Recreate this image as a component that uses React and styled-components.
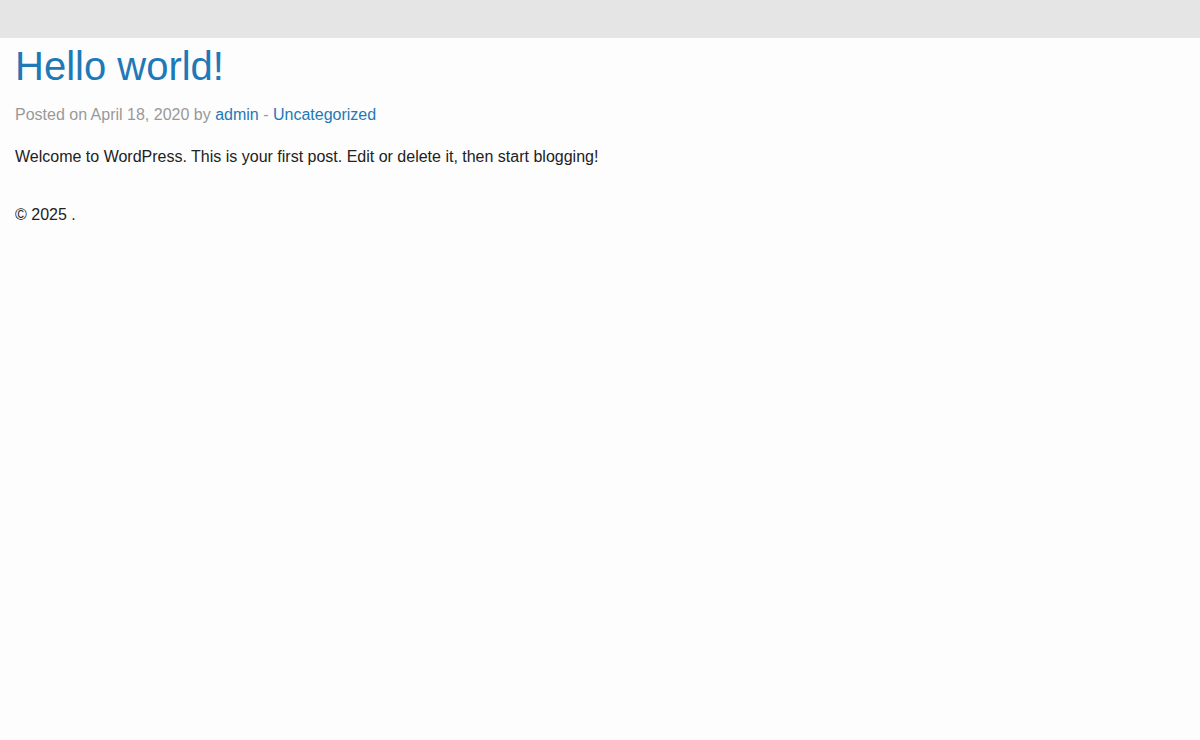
import styled, { createGlobalStyle } from "styled-components"

const Global = createGlobalStyle`
body {
  margin: 0;
  background: #fdfdfd;
  font-family: "Liberation Sans", Arial, sans-serif;
  color: #222;
}
`

const TopBar = styled.header`
height: 38px;
background-color: #e5e5e5;
`

const Main = styled.main`
padding: 0 15px;
`

const Title = styled.h1`
font-size: 40px;
font-weight: normal;
line-height: 1.2;
margin: 4px 0 16px;
color: #1e79b6;
`

const Meta = styled.p`
font-size: 16px;
color: #999;
margin: 0 0 24px;
`

const Link = styled.a`
color: #1e79b6;
text-decoration: none;
`

const Content = styled.p`
font-size: 16px;
margin: 0;
`

const Footer = styled.footer`
font-size: 16px;
padding: 40px 15px 0;
`

const App = () => {
  return (
    <>
      <Global />
      <TopBar />
      <Main>
        <article>
          <Title>Hello world!</Title>
          <Meta>
            Posted on April 18, 2020 by <Link href="#">admin</Link> - <Link href="#">Uncategorized</Link>
          </Meta>
          <Content>Welcome to WordPress. This is your first post. Edit or delete it, then start blogging!</Content>
        </article>
      </Main>
      <Footer>© 2025 .</Footer>
    </>
  )
}

export default App
